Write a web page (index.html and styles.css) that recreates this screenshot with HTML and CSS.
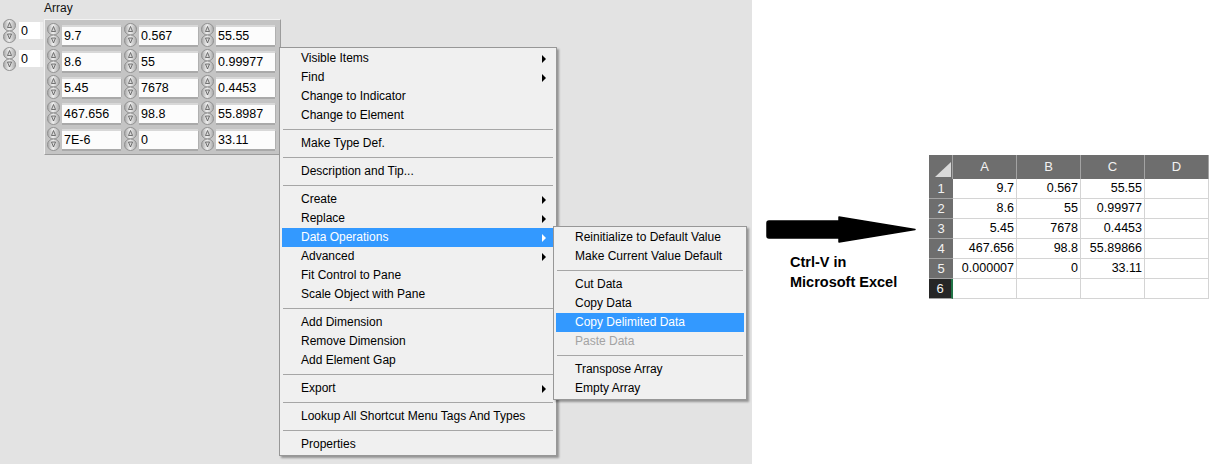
FILE: index.html
```html
<!DOCTYPE html>
<html lang="en">
<head>
<meta charset="utf-8">
<title>Array – Copy Delimited Data</title>
<link rel="stylesheet" href="styles.css">
</head>
<body>
<svg class="defs" aria-hidden="true">
  <defs>
    <linearGradient id="spinGrad" x1="0" x2="1" y1="0" y2="0">
      <stop offset="0" stop-color="#a4a4a4"/>
      <stop offset="0.45" stop-color="#efefef"/>
      <stop offset="1" stop-color="#aaaaaa"/>
    </linearGradient>
    <symbol id="spin" viewBox="0 0 13 24">
      <rect x="0.5" y="0.5" width="12" height="11.5" rx="6" ry="5.5" fill="url(#spinGrad)" stroke="#919191"/>
      <rect x="0.5" y="12" width="12" height="11.5" rx="6" ry="5.5" fill="url(#spinGrad)" stroke="#919191"/>
      <path d="M4.5 8.5 L6.5 3.5 L8.5 8.5 Z" fill="#dadada" stroke="#555" stroke-width="0.8" stroke-linejoin="round"/>
      <path d="M4.5 15 L8.5 15 L6.5 20 Z" fill="#dadada" stroke="#555" stroke-width="0.8" stroke-linejoin="round"/>
    </symbol>
  </defs>
</svg>

<div class="page">
  <div class="panel">
    <div class="label">Array</div>
    <div class="controls">
      <div class="index-col">
        <div class="index"><svg class="spin" viewBox="0 0 13 24"><use href="#spin"/></svg><div class="ibox">0</div></div>
        <div class="index"><svg class="spin" viewBox="0 0 13 24"><use href="#spin"/></svg><div class="ibox">0</div></div>
      </div>
      <div class="array">
        <div class="elem"><svg class="spin" viewBox="0 0 13 24"><use href="#spin"/></svg><div class="nbox">9.7</div></div>
        <div class="elem"><svg class="spin" viewBox="0 0 13 24"><use href="#spin"/></svg><div class="nbox">0.567</div></div>
        <div class="elem"><svg class="spin" viewBox="0 0 13 24"><use href="#spin"/></svg><div class="nbox">55.55</div></div>
        <div class="elem"><svg class="spin" viewBox="0 0 13 24"><use href="#spin"/></svg><div class="nbox">8.6</div></div>
        <div class="elem"><svg class="spin" viewBox="0 0 13 24"><use href="#spin"/></svg><div class="nbox">55</div></div>
        <div class="elem"><svg class="spin" viewBox="0 0 13 24"><use href="#spin"/></svg><div class="nbox">0.99977</div></div>
        <div class="elem"><svg class="spin" viewBox="0 0 13 24"><use href="#spin"/></svg><div class="nbox">5.45</div></div>
        <div class="elem"><svg class="spin" viewBox="0 0 13 24"><use href="#spin"/></svg><div class="nbox">7678</div></div>
        <div class="elem"><svg class="spin" viewBox="0 0 13 24"><use href="#spin"/></svg><div class="nbox">0.4453</div></div>
        <div class="elem"><svg class="spin" viewBox="0 0 13 24"><use href="#spin"/></svg><div class="nbox">467.656</div></div>
        <div class="elem"><svg class="spin" viewBox="0 0 13 24"><use href="#spin"/></svg><div class="nbox">98.8</div></div>
        <div class="elem"><svg class="spin" viewBox="0 0 13 24"><use href="#spin"/></svg><div class="nbox">55.8987</div></div>
        <div class="elem"><svg class="spin" viewBox="0 0 13 24"><use href="#spin"/></svg><div class="nbox">7E-6</div></div>
        <div class="elem"><svg class="spin" viewBox="0 0 13 24"><use href="#spin"/></svg><div class="nbox">0</div></div>
        <div class="elem"><svg class="spin" viewBox="0 0 13 24"><use href="#spin"/></svg><div class="nbox">33.11</div></div>
      </div>
    </div>

    <div class="menu main-menu">
      <div class="item sub">Visible Items</div>
      <div class="item sub">Find</div>
      <div class="item">Change to Indicator</div>
      <div class="item">Change to Element</div>
      <div class="sep"></div>
      <div class="item">Make Type Def.</div>
      <div class="sep"></div>
      <div class="item">Description and Tip...</div>
      <div class="sep"></div>
      <div class="item sub">Create</div>
      <div class="item sub">Replace</div>
      <div class="item sub hl">Data Operations</div>
      <div class="item sub">Advanced</div>
      <div class="item">Fit Control to Pane</div>
      <div class="item">Scale Object with Pane</div>
      <div class="sep"></div>
      <div class="item">Add Dimension</div>
      <div class="item">Remove Dimension</div>
      <div class="item">Add Element Gap</div>
      <div class="sep"></div>
      <div class="item sub">Export</div>
      <div class="sep"></div>
      <div class="item">Lookup All Shortcut Menu Tags And Types</div>
      <div class="sep"></div>
      <div class="item">Properties</div>
    </div>

    <div class="menu sub-menu">
      <div class="item">Reinitialize to Default Value</div>
      <div class="item">Make Current Value Default</div>
      <div class="sep"></div>
      <div class="item">Cut Data</div>
      <div class="item">Copy Data</div>
      <div class="item hl">Copy Delimited Data</div>
      <div class="item off">Paste Data</div>
      <div class="sep"></div>
      <div class="item">Transpose Array</div>
      <div class="item">Empty Array</div>
    </div>
  </div>

  <div class="side">
    <div class="note">
      <svg class="arrow" viewBox="0 0 152 30" aria-hidden="true">
        <path d="M4 6 L74 6 L74 2 L150 14.5 L74 27 L74 23 L4 23 Q2 23 2 21 L2 8 Q2 6 4 6 Z" fill="#000" stroke="#000" stroke-width="1.5" stroke-linejoin="round"/>
      </svg>
      <p class="caption">Ctrl-V in<br>Microsoft Excel</p>
    </div>

    <div class="sheet">
      <div class="corner"><svg class="tri" viewBox="0 0 16 15" aria-hidden="true"><polygon points="0,15 16,15 16,0" fill="#d9d9d9"/></svg></div>
      <div class="hd">A</div><div class="hd">B</div><div class="hd">C</div><div class="hd">D</div>

      <div class="rh">1</div><div class="c">9.7</div><div class="c">0.567</div><div class="c">55.55</div><div class="c"></div>
      <div class="rh">2</div><div class="c">8.6</div><div class="c">55</div><div class="c">0.99977</div><div class="c"></div>
      <div class="rh">3</div><div class="c">5.45</div><div class="c">7678</div><div class="c">0.4453</div><div class="c"></div>
      <div class="rh">4</div><div class="c">467.656</div><div class="c">98.8</div><div class="c">55.89866</div><div class="c"></div>
      <div class="rh">5</div><div class="c">0.000007</div><div class="c">0</div><div class="c">33.11</div><div class="c"></div>
      <div class="rh act">6</div><div class="c"></div><div class="c"></div><div class="c"></div><div class="c"></div>
    </div>
  </div>
</div>
</body>
</html>
```

FILE: styles.css
```css
* { box-sizing: border-box; }
html, body { margin: 0; padding: 0; }
body {
  background: #fff;
  font-family: "Liberation Sans", Arial, sans-serif;
  color: #000;
}
.defs { position: absolute; width: 0; height: 0; overflow: hidden; }

.page { display: flex; width: 1212px; height: 464px; overflow: hidden; }

/* LabVIEW panel */
.panel {
  position: relative;
  flex: none;
  width: 752px;
  height: 464px;
  background: #e3e3e3;
}
.label {
  height: 16px;
  line-height: 16px;
  padding-left: 44px;
  font-size: 12px;
  color: #111;
}
.controls { display: flex; align-items: flex-start; }

.index-col {
  width: 44px;
  display: flex;
  flex-direction: column;
  gap: 4px;
  padding: 3px 0 0 3px;
}
.index { display: flex; gap: 3px; align-items: flex-start; }
.spin { display: block; flex: none; width: 13px; height: 24px; }
.ibox {
  margin-top: 3px;
  width: 21px;
  height: 17px;
  padding: 1px 0 0 2px;
  background: #fff;
  font-size: 12.5px;
  line-height: 16px;
  box-shadow: 3px 0 0 #f0f0f0;
}

.array {
  margin-top: 3px;
  display: grid;
  grid-template-columns: repeat(3, 77px);
  grid-auto-rows: 26px;
  padding: 2px;
  border: 1px solid;
  border-color: #f2f2f2 #9c9c9c #9c9c9c #f2f2f2;
  background: #c4c4c4;
}
.elem {
  display: flex;
  align-items: flex-start;
  gap: 2px;
  padding: 1px 3px 1px 0;
}
.nbox {
  margin-top: 4px;
  width: 59px;
  height: 18px;
  padding: 1px 0 0 2px;
  background: #fcfcfc;
  font-size: 12.5px;
  line-height: 17px;
  box-shadow: 0 -2px 0 #d8d8d8, 0 2px 0 #a9a9a9, 1px 0 0 #b0b0b0;
}

/* context menus */
.menu {
  position: absolute;
  background: #f0f0f0;
  border: 1px solid #979797;
  box-shadow: 2px 2px 2px rgba(0, 0, 0, 0.35);
  padding: 1px 2px;
  font-size: 12px;
  color: #000;
}
.main-menu { left: 279px; top: 47px; width: 278px; }
.sub-menu { left: 553px; top: 226px; width: 194px; }
.item {
  height: 19px;
  line-height: 19px;
  padding: 0 8px 0 19px;
  display: flex;
  justify-content: space-between;
  align-items: center;
  white-space: nowrap;
}
.item.sub::after {
  content: "";
  border-left: 4px solid #000;
  border-top: 4px solid transparent;
  border-bottom: 4px solid transparent;
}
.item.hl { background: #3399ff; color: #fff; }
.item.hl.sub::after { border-left-color: #fff; }
.item.off { color: #a3a3a3; }
.sep { height: 1px; margin: 4px 1px; background: #a6a6a6; }

/* right side */
.side { flex: 1; display: flex; align-items: flex-start; background: #fff; }
.note { flex: none; width: 177px; padding-top: 215px; }
.arrow { display: block; margin-left: 13px; width: 152px; height: 30px; }
.caption {
  margin: 7px 0 0 38px;
  font-weight: bold;
  font-size: 14.5px;
  line-height: 20px;
  color: #000;
}

.sheet {
  margin-top: 155px;
  display: grid;
  grid-template-columns: 24px repeat(4, 64px);
  grid-template-rows: 24px repeat(6, 20px);
  font-size: 12.5px;
}
.corner {
  background: #6e6e6e;
  border-right: 1px solid #a3a3a3;
  display: flex;
  align-items: flex-end;
  justify-content: flex-end;
  padding: 0 1px 2px 0;
}
.tri { display: block; width: 16px; height: 15px; }
.hd {
  background: #6e6e6e;
  color: #f2f2f2;
  text-align: center;
  line-height: 24px;
  font-size: 13px;
  border-right: 1px solid #a3a3a3;
}
.rh {
  background: #6e6e6e;
  color: #f2f2f2;
  text-align: center;
  line-height: 19px;
  font-size: 13px;
  border-bottom: 1px solid #a3a3a3;
}
.rh.act { background: #262626; border-right: 2px solid #217346; }
.c {
  border-right: 1px solid #d4d4d4;
  border-bottom: 1px solid #d4d4d4;
  text-align: right;
  padding-right: 2px;
  line-height: 19px;
}
```
